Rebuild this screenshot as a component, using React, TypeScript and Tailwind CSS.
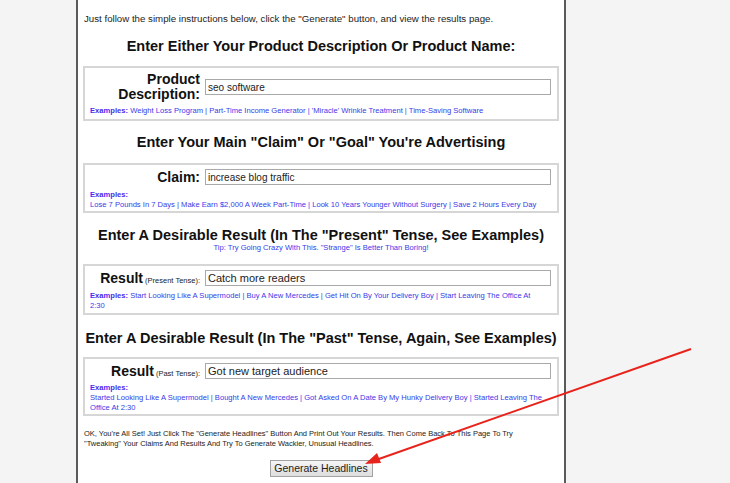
import React from "react";

const sans = { fontFamily: '"Liberation Sans", Arial, sans-serif' };

function Examples({ lines, inline }: { lines: string[]; inline: boolean }) {
  return (
    <div className="pl-[5px] pr-[10px] text-[7.6px] leading-[10px] text-[#3a3ae8]">
      <span className="font-bold text-[#4a2cf0]">Examples:</span>
      {inline ? " " : <br />}
      {lines.map((l, i) => (
        <span key={i}>
          {i > 0 && " | "}
          {l}
        </span>
      ))}
    </div>
  );
}

function FieldBox({
  label,
  sub,
  value,
  big,
  examples,
  inline,
  twoLine,
  gap,
  bottomPad,
}: {
  label: React.ReactNode;
  sub?: string;
  value: string;
  big?: boolean;
  examples: string[];
  inline: boolean;
  twoLine?: boolean;
  gap: string;
  bottomPad: string;
}) {
  return (
    <div className={`mx-[5px] border-2 border-[#d6d6d6] pt-[4px] ${bottomPad}`}>
      <div className="flex items-center">
        <div
          className={`w-[115px] shrink-0 text-right font-bold text-[#111] text-[14px] ${
            twoLine ? "leading-[15px]" : "h-[16px] leading-[16px]"
          }`}
        >
          {label}
          {sub && (
            <span className="font-normal text-[7.5px] leading-none text-[#222]"> ({sub}):</span>
          )}
        </div>
        <div
          className={`ml-[5px] w-[346px] h-[16px] border border-[#a9a9a9] bg-white flex items-center px-[2px] text-[#222] ${
            big ? "text-[11px]" : "text-[10px]"
          }`}
        >
          {value}
        </div>
      </div>
      <div className={gap}>
        <Examples lines={examples} inline={inline} />
      </div>
    </div>
  );
}

function Heading({ children, mt }: { children: React.ReactNode; mt: string }) {
  return (
    <h2 className={`${mt} h-[18px] text-center text-[14.5px] font-bold leading-[18px] text-[#111]`}>
      {children}
    </h2>
  );
}

export default function App() {
  return (
    <div className="relative h-[483px] w-[730px] overflow-hidden bg-[#f4f4f4]" style={sans}>
      <div className="flex h-full">
        <div className="w-[76px] shrink-0" />
        <div className="w-[490px] shrink-0 border-x-2 border-[#5a5a5a] bg-white">
          <div className="-mt-[12px] h-[12px] pl-[8px] text-[10px] leading-[12px] text-[#222]">
            Simply type your information in the boxes and generate your headlines quickly
          </div>
          <div className="mt-[13px] h-[12px] pl-[6px] text-[9.7px] leading-[12px] text-[#222]">
            Just follow the simple instructions below, click the "Generate" button, and view the results page.
          </div>
          <Heading mt="mt-[12px]">Enter Either Your Product Description Or Product Name:</Heading>
          <div className="mt-[11px]">
            <FieldBox
              label={
                <>
                  Product
                  <br />
                  Description:
                </>
              }
              twoLine
              value="seo software"
              examples={[
                "Weight Loss Program",
                "Part-Time Income Generator",
                "'Miracle' Wrinkle Treatment",
                "Time-Saving Software",
              ]}
              inline
              gap="mt-[4px]"
              bottomPad="pb-[3px]"
            />
          </div>
          <Heading mt="mt-[12px]">Enter Your Main "Claim" Or "Goal" You're Advertising</Heading>
          <div className="mt-[12px]">
            <FieldBox
              label="Claim:"
              value="increase blog traffic"
              examples={[
                "Lose 7 Pounds In 7 Days",
                "Make Earn $2,000 A Week Part-Time",
                "Look 10 Years Younger Without Surgery",
                "Save 2 Hours Every Day",
              ]}
              inline={false}
              gap="mt-[5px]"
              bottomPad="pb-[1px]"
            />
          </div>
          <Heading mt="mt-[13px]">Enter A Desirable Result (In The "Present" Tense, See Examples)</Heading>
          <div className="-mt-[1px] h-[10px] text-center text-[7.6px] leading-[10px] text-[#3a3ae8]">
            Tip: Try Going Crazy With This. "Strange" Is Better Than Boring!
          </div>
          <div className="mt-[11px]">
            <FieldBox
              label="Result"
              sub="Present Tense"
              big
              value="Catch more readers"
              examples={[
                "Start Looking Like A Supermodel",
                "Buy A New Mercedes",
                "Get Hit On By Your Delivery Boy",
                "Start Leaving The Office At 2:30",
              ]}
              inline
              gap="mt-[5px]"
              bottomPad="pb-[2px]"
            />
          </div>
          <Heading mt="mt-[14px]">Enter A Desirable Result (In The "Past" Tense, Again, See Examples)</Heading>
          <div className="mt-[10px]">
            <FieldBox
              label="Result"
              sub="Past Tense"
              big
              value="Got new target audience"
              examples={[
                "Started Looking Like A Supermodel",
                "Bought A New Mercedes",
                "Got Asked On A Date By My Hunky Delivery Boy",
                "Started Leaving The Office At 2:30",
              ]}
              inline={false}
              gap="mt-[4px]"
              bottomPad="pb-[1px]"
            />
          </div>
          <p className="mt-[13px] px-[6px] text-[7.5px] leading-[10px] text-[#222]">
            OK, You're All Set! Just Click The "Generate Headlines" Button And Print Out Your Results. Then Come Back To This Page To Try
            <br />
            "Tweaking" Your Claims And Results And Try To Generate Wackier, Unusual Headlines.
          </p>
          <div className="mt-[11px] flex justify-center">
            <button
              type="button"
              className="h-[17px] w-[103px] border border-[#a3a3a3] bg-gradient-to-b from-[#f6f6f6] to-[#dedede] text-[10.5px] leading-[15px] text-[#222]"
            >
              Generate Headlines
            </button>
          </div>
        </div>
      </div>
      <svg className="pointer-events-none absolute inset-0" width="730" height="483">
        <line x1="691" y1="349" x2="376" y2="460" stroke="#e8231c" strokeWidth="2" />
        <polygon points="365,464 377,453 381,463" fill="#e8231c" />
      </svg>
    </div>
  );
}
